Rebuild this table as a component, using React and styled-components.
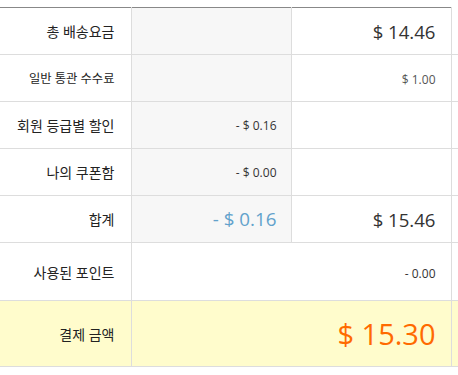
import React from "react";
import styled, { createGlobalStyle } from "styled-components";

const GlobalStyle = createGlobalStyle`
  html, body {
    margin: 0;
    padding: 0;
    background: #fff;
  }
  body {
    font-family: "Open Sans", "Noto Sans CJK KR", sans-serif;
    color: #333;
  }
  td {
    box-sizing: border-box;
  }
`;

const Wrap = styled.div`
  padding-top: 7px;
  width: 458px;
  overflow: hidden;
`;

const Table = styled.table`
  border-collapse: collapse;
  table-layout: fixed;
  width: 470px;
`;

const borderColors = {
  dark: "#888",
  light: "#ddd",
  orange: "#f27a21",
};

const Row = styled.tr`
  height: ${(p) => p.h || 47}px;
  background: ${(p) => (p.highlight ? "#fffccc" : "transparent")};

  & > td {
    border-top: 1px solid ${(p) => borderColors[p.top || "light"]};
  }
`;

const Label = styled.td`
  width: 131px;
  padding: 0 16px 0 0;
  text-align: right;
  font-size: ${(p) => (p.small ? 12.3 : 14)}px;
  color: #222;
  border-right: 1px solid #ddd;
  border-bottom: 1px solid #ddd;
  white-space: nowrap;
`;

const Mid = styled.td`
  width: 160px;
  padding: 0 14px 0 0;
  text-align: right;
  background: #f7f7f7;
  border-right: 1px solid #ddd;
  border-bottom: 1px solid #ddd;
  font-size: 12px;
  color: #333;
  white-space: nowrap;
`;

const Value = styled.td`
  width: 160px;
  padding: 0 15px 0 0;
  text-align: right;
  border-right: 1px solid #ddd;
  border-bottom: 1px solid #ddd;
  white-space: nowrap;
`;

const Rest = styled.td`
  border-bottom: 1px solid #ddd;
  && {
    border-top: ${(p) => (p.line ? "1px solid #ddd" : "none")};
  }
`;

const Amount = styled.span`
  font-size: ${(p) => p.size || 12}px;
  color: ${(p) => p.color || "#333"};
`;

export default function App() {
  return (
    <Wrap>
      <GlobalStyle />
      <Table>
        <tbody>
          <Row top="dark">
            <Label>총 배송요금</Label>
            <Mid />
            <Value>
              <Amount size={18.6}>$ 14.46</Amount>
            </Value>
            <Rest />
          </Row>
          <Row top="light">
            <Label small>일반 통관 수수료</Label>
            <Mid />
            <Value>
              <Amount size={12} color="#555">$ 1.00</Amount>
            </Value>
            <Rest />
          </Row>
          <Row top="dark">
            <Label>회원 등급별 할인</Label>
            <Mid>- $ 0.16</Mid>
            <Value />
            <Rest />
          </Row>
          <Row top="light">
            <Label>나의 쿠폰함</Label>
            <Mid>- $ 0.00</Mid>
            <Value />
            <Rest />
          </Row>
          <Row top="dark">
            <Label>합계</Label>
            <Mid>
              <Amount size={18.8} color="#62a2cc">- $ 0.16</Amount>
            </Mid>
            <Value>
              <Amount size={18.6}>$ 15.46</Amount>
            </Value>
            <Rest />
          </Row>
          <Row top="orange" h={58}>
            <Label>사용된 포인트</Label>
            <Value colSpan={2}>
              <Amount size={12}>- 0.00</Amount>
            </Value>
            <Rest />
          </Row>
          <Row top="light" h={66} highlight>
            <Label>결제 금액</Label>
            <Value colSpan={2}>
              <Amount size={29} color="#ff6a00">$ 15.30</Amount>
            </Value>
            <Rest line />
          </Row>
        </tbody>
      </Table>
    </Wrap>
  );
}
